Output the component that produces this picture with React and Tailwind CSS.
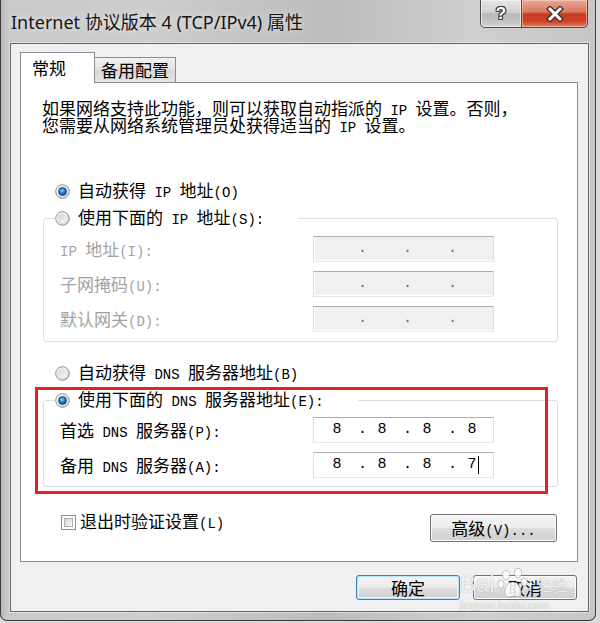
import React from "react";

const MONO = "font-['Liberation_Mono','Noto_Sans_CJK_SC',monospace]";

function mix(s) {
  return s
    .split(/([\x00-\xff]+)/)
    .filter(Boolean)
    .map((part, i) =>
      /^[\x00-\xff]+$/.test(part) ? (
        <span key={i} className={`${MONO} text-[14px] whitespace-pre`}>
          {part}
        </span>
      ) : (
        <span key={i}>{part}</span>
      )
    );
}

function Radio({ checked }) {
  return (
    <svg width="15" height="15" viewBox="0 0 15 15" className="shrink-0">
      <defs>
        <linearGradient id="rgOuter" x1="0" y1="0" x2="1" y2="1">
          <stop offset="0" stopColor="#ffffff" />
          <stop offset="1" stopColor="#cfcfcf" />
        </linearGradient>
        <linearGradient id="rgInner" x1="0" y1="0" x2="1" y2="1">
          <stop offset="0" stopColor="#d0d0d0" />
          <stop offset="1" stopColor="#fbfbfb" />
        </linearGradient>
        <radialGradient id="rgDot" cx="0.45" cy="0.4" r="0.6">
          <stop offset="0" stopColor="#9fd6ff" />
          <stop offset="0.45" stopColor="#2f86d0" />
          <stop offset="1" stopColor="#0d3f78" />
        </radialGradient>
      </defs>
      <circle cx="7.5" cy="7.5" r="6.8" fill="url(#rgOuter)" stroke="#8d8f91" strokeWidth="1" />
      <circle cx="7.5" cy="7.5" r="4.6" fill="url(#rgInner)" />
      {checked && <circle cx="7.5" cy="7.5" r="4" fill="url(#rgDot)" stroke="#103d6b" strokeWidth="0.6" />}
    </svg>
  );
}

function Checkbox() {
  return (
    <div className="w-[15px] h-[15px] border border-[#8e8f8f] bg-white p-[2px] shrink-0">
      <div className="w-full h-full border border-[#aeb0b2] bg-[linear-gradient(135deg,#d6d6d6,#f7f7f7)]" />
    </div>
  );
}

function IPField({ values, disabled, cursor }) {
  const base = disabled ? "bg-[#f0f0f0] text-[#6d6d6d]" : "bg-white text-black";
  return (
    <div
      className={`w-[181px] h-[26px] border border-t-[#abadb3] border-x-[#dbdfe6] border-b-[#e3e9ef] shadow-[inset_1px_0_0_#ffffff,inset_0_-1px_0_#ffffff] ${base} flex items-center pl-[8px] ${MONO} text-[15px] leading-[24px]`}
    >
      {[0, 1, 2, 3].map((i) => (
        <React.Fragment key={i}>
          <span className="w-[30px] text-center relative h-[24px]">
            {values ? values[i] : ""}
            {cursor && i === 3 && (
              <span className="absolute left-[21px] top-[3px] w-[1px] h-[18px] bg-black" />
            )}
          </span>
          {i < 3 && <span className="w-[15px] pl-[6px]">.</span>}
        </React.Fragment>
      ))}
    </div>
  );
}

function Row({ label, disabled, values, cursor, first }) {
  return (
    <div className={`${first ? "mt-[8px]" : "mt-[9px]"} flex items-center h-[26px] pl-[16px]`}>
      <div className={`w-[253px] h-[20px] text-[17px] leading-[20px] ${disabled ? "text-[#a2a2a2]" : "text-black"}`}>
        {mix(label)}
      </div>
      <IPField values={values} disabled={disabled} cursor={cursor} />
    </div>
  );
}

function WinButton({ children, className = "", isDefault }) {
  return (
    <div
      className={`rounded-[3px] border ${
        isDefault
          ? "border-[#3c7fb1] shadow-[inset_0_0_0_1px_#b9e3fa,inset_0_0_0_2px_#e6f5fd]"
          : "border-[#707070] shadow-[inset_0_0_0_1px_#fcfcfc]"
      } bg-[linear-gradient(to_bottom,#f4f4f4_0%,#ececec_48%,#dddddd_52%,#cfcfcf_100%)] flex items-center justify-center text-[17px] leading-none text-black ${className}`}
    >
      {children}
    </div>
  );
}

export default function App() {
  return (
    <div className="w-[600px] h-[623px] bg-[#dadada] relative overflow-hidden font-['Noto_Sans_CJK_SC',sans-serif] text-black">
      <div className="w-[596px] h-[621px] border-x border-b border-[#3d3d3d] rounded-b-[7px] bg-[linear-gradient(90deg,#b8b8b8_0%,#c9c9c9_1%,#cdcdcd_25%,#bcbcbc_55%,#cfcfcf_80%,#c6c6c6_100%)] flex flex-col">
        {/* title bar */}
        <div className="h-[43px] flex justify-between items-start shrink-0">
          <div className="pl-[10px] pt-[10px] text-[18px] leading-[24px] font-['Noto_Sans','Noto_Sans_CJK_SC',sans-serif] text-[#141414] [text-shadow:0_0_6px_rgba(255,255,255,0.8)] whitespace-nowrap">
            Internet 协议版本 4 (TCP/IPv4) 属性
          </div>
          <div className="flex mr-[7px]">
            <div className="w-[42px] h-[28px] border border-t-0 border-[#4b4b4b] rounded-bl-[5px] bg-[linear-gradient(to_bottom,#e4e4e4_0%,#d2d2d2_45%,#b9b9b9_52%,#c6c6c6_85%,#d8d8d8_100%)] shadow-[inset_0_0_0_1px_rgba(255,255,255,0.55)] flex items-center justify-center">
              <span className="font-['Liberation_Sans',sans-serif] font-bold text-[17px] leading-none text-white [text-shadow:1px_0_0_#3a3a3a,-1px_0_0_#3a3a3a,0_1px_0_#3a3a3a,0_-1px_0_#3a3a3a,1px_1px_0_#3a3a3a,-1px_-1px_0_#3a3a3a,1px_-1px_0_#3a3a3a,-1px_1px_0_#3a3a3a]">
                ?
              </span>
            </div>
            <div className="w-[66px] h-[28px] border border-l-0 border-t-0 border-[#4b4b4b] rounded-br-[5px] bg-[linear-gradient(to_bottom,#e7aa9a_0%,#d9765f_45%,#c53a20_52%,#cc4428_80%,#e08a68_100%)] shadow-[inset_0_0_0_1px_rgba(255,220,210,0.5)] flex items-center justify-center">
              <svg width="20" height="16" viewBox="0 0 20 16">
                <path d="M5 3 L15 13 M15 3 L5 13" stroke="#3a2a28" strokeWidth="5.5" strokeLinecap="square" />
                <path d="M5 3 L15 13 M15 3 L5 13" stroke="#ffffff" strokeWidth="3" strokeLinecap="square" />
              </svg>
            </div>
          </div>
        </div>

        {/* client area */}
        <div className="ml-[9px] mr-[6px] h-[569px] border border-[#646567] shadow-[0_0_0_1px_rgba(255,255,255,0.45)] bg-[#f0f0f0] pt-[8px] pl-[9px] pr-[10px] flex flex-col shrink-0">
          {/* tabs */}
          <div className="h-[30px] flex items-end shrink-0">
            <div className="relative z-10 -mb-[1px] w-[75px] h-[31px] border border-b-0 border-[#898c95] bg-white pl-[11px] pt-[5px] text-[17px] leading-[20px]">
              常规
            </div>
            <div className="w-[81px] h-[25px] border border-l-0 border-b-0 border-[#898c95] bg-[linear-gradient(to_bottom,#f2f2f2,#e1e1e1_50%,#d7d7d7_51%,#e4e4e4)] pl-[6px] pt-[2px] text-[17px] leading-[20px]">
              备用配置
            </div>
          </div>

          {/* panel */}
          <div className="h-[480px] border border-[#898c95] bg-white shrink-0 flex flex-col">
            <div className="ml-[21px] mt-[16px] text-[17px] leading-[17px]">
              <div className="h-[17px] whitespace-nowrap">{mix("如果网络支持此功能，则可以获取自动指派的 IP 设置。否则，")}</div>
              <div className="h-[17px] whitespace-nowrap">{mix("您需要从网络系统管理员处获得适当的 IP 设置。")}</div>
            </div>

            <div className="ml-[34px] mt-[48px] h-[20px] flex items-center gap-[8px] text-[17px] leading-[20px]">
              <Radio checked />
              <span>{mix("自动获得 IP 地址(O)")}</span>
            </div>

            <fieldset className="ml-[22px] mt-[7px] w-[515px] border border-[#d5dfe5] rounded-[3px] pb-[9px]">
              <legend className="ml-[11px] pr-[34px]">
                <span className="h-[20px] flex items-center gap-[8px] text-[17px] leading-[20px]">
                  <Radio />
                  <span>{mix("使用下面的 IP 地址(S):")}</span>
                </span>
              </legend>
              <Row first label="IP 地址(I):" disabled />
              <Row label="子网掩码(U):" disabled />
              <Row label="默认网关(D):" disabled />
            </fieldset>

            <div className="ml-[34px] mt-[21px] h-[20px] flex items-center gap-[8px] text-[17px] leading-[20px]">
              <Radio />
              <span>{mix("自动获得 DNS 服务器地址(B)")}</span>
            </div>

            <fieldset className="ml-[22px] mt-[7px] w-[515px] border border-[#d5dfe5] rounded-[3px] pb-[8px]">
              <legend className="ml-[11px] pr-[34px]">
                <span className="h-[20px] flex items-center gap-[8px] text-[17px] leading-[20px]">
                  <Radio checked />
                  <span>{mix("使用下面的 DNS 服务器地址(E):")}</span>
                </span>
              </legend>
              <div className="mt-[7px] flex items-center h-[26px] pl-[16px]">
                <div className="w-[253px] h-[20px] text-[17px] leading-[20px]">{mix("首选 DNS 服务器(P):")}</div>
                <IPField values={["8", "8", "8", "8"]} />
              </div>
              <div className="mt-[9px] flex items-center h-[26px] pl-[16px]">
                <div className="w-[253px] h-[20px] text-[17px] leading-[20px]">{mix("备用 DNS 服务器(A):")}</div>
                <IPField values={["8", "8", "8", "7"]} cursor />
              </div>
            </fieldset>

            <div className="mt-[25px] ml-[40px] mr-[20px] flex justify-between items-start">
              <div className="h-[20px] flex items-center gap-[4px] text-[17px] leading-[20px]">
                <Checkbox />
                <span>{mix("退出时验证设置(L)")}</span>
              </div>
              <WinButton className="mt-[2px] w-[127px] h-[28px]">
                <span>{mix("高级(V)...")}</span>
              </WinButton>
            </div>
          </div>

          {/* bottom buttons */}
          <div className="mt-[13px] flex justify-end gap-[13px] pr-[1px]">
            <WinButton isDefault className="w-[104px] h-[25px]">
              确定
            </WinButton>
            <WinButton className="w-[104px] h-[25px]">取消</WinButton>
          </div>
        </div>
      </div>

      {/* red annotation */}
      <div className="absolute left-[35px] top-[387px] w-[513px] h-[107px] border-[3px] border-[#e41f26] pointer-events-none" />

      {/* watermark */}
      <div className="absolute left-[460px] top-[566px] pointer-events-none text-white/85 [text-shadow:0_0_1px_rgba(0,0,0,0.4)]">
        <div className="flex items-end leading-none">
          <span className="font-['Liberation_Sans',sans-serif] text-[24px] leading-[24px]">Bai</span>
          <svg width="36" height="34" viewBox="0 0 32 34" className="-mb-[4px]">
            <g fill="rgba(255,255,255,0.85)" stroke="rgba(120,120,120,0.5)" strokeWidth="0.8">
              <ellipse cx="9" cy="9" rx="3.6" ry="4.6" />
              <ellipse cx="21" cy="7" rx="3.6" ry="4.6" />
              <ellipse cx="4" cy="18" rx="3.2" ry="4" />
              <ellipse cx="27" cy="16" rx="3.2" ry="4" />
              <path d="M16 16 C10 16 7 24 8 28 C9 32 13 31 16 30 C19 31 23 32 24 28 C25 24 22 16 16 16 Z" />
            </g>
          </svg>
          <span className="ml-[6px] text-[15px] leading-[22px]">经验</span>
        </div>
        <div className="mt-[3px] text-[11px] leading-[12px] font-['Liberation_Sans',sans-serif]">jingyan.baidu.com</div>
      </div>
    </div>
  );
}
